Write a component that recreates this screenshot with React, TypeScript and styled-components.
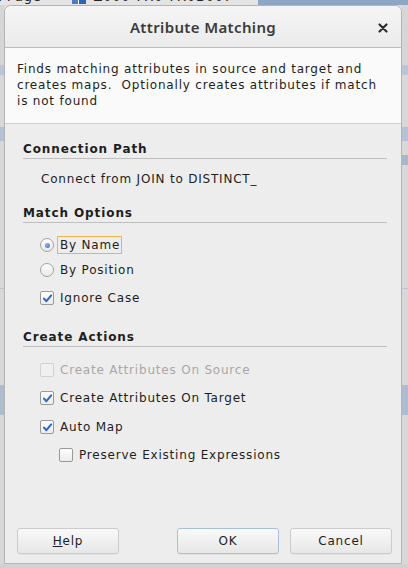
import React from "react";
import styled, { createGlobalStyle } from "styled-components";

const Global = createGlobalStyle`
  html, body { margin: 0; padding: 0; }
  body {
    width: 408px;
    height: 568px;
    overflow: hidden;
    background: #d9dadc;
    font-family: "DejaVu Sans", "Liberation Sans", sans-serif;
  }
`;

const Page = styled.div`
  width: 408px;
  height: 568px;
  display: grid;
  grid-template-columns: 4px 398px 6px;
  grid-template-rows: 5px 559px 4px;
  background: #dcdcdc;
  overflow: hidden;
`;

const TopStrip = styled.div`
  grid-column: 1 / 4;
  display: flex;
  overflow: hidden;
  background: linear-gradient(90deg, #e4e4e4 0 258px, #8ea6c4 258px 100%);
  font-size: 13px;
  color: #222;
`;

const TopText = styled.span<{ $ml: number }>`
  margin-top: -10px;
  margin-left: ${(p) => p.$ml}px;
  white-space: nowrap;
  line-height: 14px;
  letter-spacing: 0.8px;
`;

const TopIcon = styled.span`
  margin-top: -6px;
  margin-left: 30px;
  width: 14px;
  height: 10px;
  background: linear-gradient(90deg, #4a7cc0 0 6px, #fff 6px 7px, #2f64b0 7px);
`;

const SideStrip = styled.div<{ $right?: boolean }>`
  background:
    linear-gradient(
      180deg,
      #d6d6d6 0 60px,
      #b9c6d8 60px 70px,
      #d8d8d8 70px 122px,
      #b4c2d6 122px 136px,
      #d8d8d8 136px 150px,
      ${(p) => (p.$right ? "#a7b7cc" : "#d8d8d8")} 150px 160px,
      #d8d8d8 160px 283px,
      #c0c4ca 283px 284px,
      #d8d8d8 284px 380px,
      #aebcd0 380px 410px,
      #d8d8d8 410px 100%
    );
`;

const BottomStrip = styled.div`
  grid-column: 1 / 4;
  background: #d2d2d2;
`;

const Dialog = styled.div`
  display: flex;
  flex-direction: column;
  background: #ededed;
  border: 1px solid #b4b4b4;
  border-radius: 7px 7px 0 0;
  overflow: hidden;
  box-sizing: border-box;
`;

const TitleBar = styled.div`
  height: 42px;
  flex: none;
  display: grid;
  grid-template-columns: 40px 1fr 40px;
  align-items: center;
  background: linear-gradient(180deg, #f5f5f5, #ebebeb);
  border-bottom: 1px solid #bdbdbd;
  box-sizing: border-box;
`;

const Title = styled.div`
  grid-column: 2;
  text-align: center;
  font-family: "Noto Sans", "DejaVu Sans", sans-serif;
  font-weight: 600;
  font-size: 15px;
  letter-spacing: 0.35px;
  color: #3b3b3b;
  padding-top: 1px;
`;

const Close = styled.div`
  grid-column: 3;
  justify-self: center;
  display: flex;
  align-items: center;
  justify-content: center;
  margin-left: 4px;
  margin-top: 2px;
`;

const Description = styled.div`
  height: 76px;
  flex: none;
  box-sizing: border-box;
  padding: 13px 14px 0 12px;
  background: #fafafa;
  border-bottom: 1px solid #cfcfcf;
  font-size: 12px;
  line-height: 16px;
  letter-spacing: 0.8px;
  color: #1e1e1e;
`;

const Body = styled.div`
  flex: 1;
  display: flex;
  flex-direction: column;
  padding: 17px 14px 0 18px;
  font-size: 12px;
  letter-spacing: 0.8px;
`;

const SectionHeader = styled.div<{ $mt: number }>`
  margin-top: ${(p) => p.$mt}px;
  font-weight: 700;
  letter-spacing: 0.9px;
  color: #1e1e1e;
  line-height: 16px;
  padding-bottom: 1px;
  border-bottom: 1px solid #bfbfbf;
`;

const PathText = styled.div`
  margin: 12px 0 0 18px;
  line-height: 16px;
  color: #1e1e1e;
`;

const OptionRow = styled.label<{ $mt: number; $indent?: boolean; $disabled?: boolean }>`
  display: flex;
  align-items: center;
  gap: 6px;
  height: 18px;
  margin-top: ${(p) => p.$mt}px;
  margin-left: ${(p) => (p.$indent ? 36 : 17)}px;
  color: ${(p) => (p.$disabled ? "#a8a8a8" : "#1e1e1e")};
`;

const Box = styled.span<{ $disabled?: boolean }>`
  width: 14px;
  height: 14px;
  flex: none;
  box-sizing: border-box;
  border: 1px solid ${(p) => (p.$disabled ? "#d2d2d2" : "#9a9a9a")};
  border-radius: 2px;
  background: ${(p) => (p.$disabled ? "#f0f0f0" : "linear-gradient(180deg, #fdfdfd, #ececec)")};
  display: flex;
  align-items: center;
  justify-content: center;
`;

const Radio = styled.span`
  width: 14px;
  height: 14px;
  flex: none;
  box-sizing: border-box;
  border: 1px solid #a2a2a2;
  border-radius: 50%;
  background: linear-gradient(180deg, #fdfdfd, #e9e9e9);
  display: flex;
  align-items: center;
  justify-content: center;
`;

const Dot = styled.span`
  width: 5px;
  height: 5px;
  border-radius: 50%;
  background: radial-gradient(circle at 40% 35%, #8fb2e6, #3a6fc4);
`;

const Focused = styled.span`
  margin-left: -3px;
  padding: 0 1px 0 2px;
  border: 1px solid #f0b24a;
  line-height: 16px;
`;

const Spacer = styled.div`
  flex: 1;
`;

const ButtonRow = styled.div`
  display: grid;
  grid-template-columns: 102px 1fr 102px 11px 102px;
  padding: 0 9px 9px 12px;
  margin-left: -18px;
  margin-right: -14px;
  height: 26px;
`;

const Button = styled.div<{ $col: number; $default?: boolean }>`
  grid-column: ${(p) => p.$col};
  height: 26px;
  box-sizing: border-box;
  border: 1px solid ${(p) => (p.$default ? "#a9bfd9" : "#cbcbcb")};
  border-radius: 3px;
  background: linear-gradient(180deg, #f9f9f9, #e7e7e7);
  display: flex;
  align-items: center;
  justify-content: center;
  color: #1e1e1e;
  box-shadow: 0 1px 0 rgba(0,0,0,0.04);
`;

const U = styled.span`
  text-decoration: underline;
`;

const Check = () => (
  <svg width="11" height="11" viewBox="0 0 11 11">
    <path d="M2 5.6 L4.4 8.2 L9.2 2.4" fill="none" stroke="#2f66c8" strokeWidth="2" strokeLinecap="round" strokeLinejoin="round" />
  </svg>
);

const XIcon = () => (
  <svg width="10" height="10" viewBox="0 0 10 10">
    <path d="M1.5 1.5 L8.5 8.5 M8.5 1.5 L1.5 8.5" stroke="#2e2e2e" strokeWidth="2.2" strokeLinecap="round" />
  </svg>
);

export default function App() {
  return (
    <>
      <Global />
      <Page>
        <TopStrip>
          <TopText $ml={-4}>t Page</TopText>
          <TopIcon />
          <TopText $ml={8}>Z000 7X0 7X0B007</TopText>
        </TopStrip>
        <SideStrip />
        <Dialog>
          <TitleBar>
            <Title>Attribute Matching</Title>
            <Close><XIcon /></Close>
          </TitleBar>
          <Description>
            Finds matching attributes in source and target and creates maps.&nbsp; Optionally creates attributes if match is not found
          </Description>
          <Body>
            <SectionHeader $mt={0}>Connection Path</SectionHeader>
            <PathText>Connect from JOIN to DISTINCT_</PathText>
            <SectionHeader $mt={18}>Match Options</SectionHeader>
            <OptionRow $mt={13}>
              <Radio><Dot /></Radio>
              <Focused>By Name</Focused>
            </OptionRow>
            <OptionRow $mt={7}>
              <Radio />
              By Position
            </OptionRow>
            <OptionRow $mt={10}>
              <Box><Check /></Box>
              Ignore Case
            </OptionRow>
            <SectionHeader $mt={22}>Create Actions</SectionHeader>
            <OptionRow $mt={14} $disabled>
              <Box $disabled />
              Create Attributes On Source
            </OptionRow>
            <OptionRow $mt={10}>
              <Box><Check /></Box>
              Create Attributes On Target
            </OptionRow>
            <OptionRow $mt={11}>
              <Box><Check /></Box>
              Auto Map
            </OptionRow>
            <OptionRow $mt={10} $indent>
              <Box />
              Preserve Existing Expressions
            </OptionRow>
            <Spacer />
            <ButtonRow>
              <Button $col={1}><U>H</U>elp</Button>
              <Button $col={3} $default>OK</Button>
              <Button $col={5}>Cancel</Button>
            </ButtonRow>
          </Body>
        </Dialog>
        <SideStrip $right />
        <BottomStrip />
      </Page>
    </>
  );
}
